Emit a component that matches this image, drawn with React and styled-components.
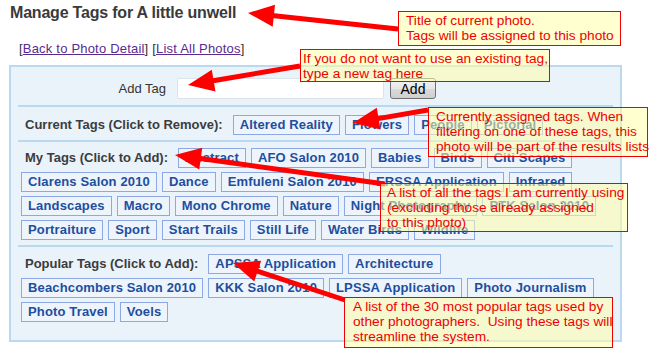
import React from "react";
import styled, { createGlobalStyle } from "styled-components";

const Global = createGlobalStyle`
  html, body { margin: 0; padding: 0; background: #ffffff; }
  body { font-family: "Liberation Sans", Arial, sans-serif; }
`;

const Page = styled.div`
  position: relative;
  width: 653px;
  height: 358px;
  overflow: hidden;
  background: #fff;
`;

const Title = styled.h1`
  margin: 0;
  padding: 3px 0 0 10px;
  font-size: 16px;
  line-height: 19px;
  letter-spacing: -0.2px;
  font-weight: bold;
  color: #3a3a3a;
`;

const NavLine = styled.div`
  margin: 19px 0 0 19px;
  font-size: 13px;
  line-height: 15px;
  letter-spacing: 0.2px;
  color: #333;
`;

const NavLink = styled.a`
  color: #5a2a90;
  text-decoration: underline;
`;

const Panel = styled.div`
  box-sizing: border-box;
  margin: 9px 0 0 9px;
  width: 613px;
  border: 2px solid #b8d9f0;
  background: #eaf2fa;
  padding: 0 7px 18px;
`;

const AddRow = styled.div`
  display: flex;
  align-items: center;
  height: 22px;
  margin-top: 10px;
  margin-bottom: 6px;
`;

const AddLabel = styled.label`
  width: 148px;
  text-align: right;
  font-size: 13px;
  color: #333;
  margin-right: 11px;
`;

const TagInput = styled.input`
  box-sizing: border-box;
  width: 207px;
  height: 21px;
  border: 1px solid #dde3ea;
  border-radius: 2px;
  background: #fff;
  margin: 0 6px 0 0;
  padding: 0 3px;
`;

const AddButton = styled.button`
  box-sizing: border-box;
  width: 46px;
  height: 21px;
  margin-top: 1px;
  border: 1px solid #707070;
  border-radius: 3px;
  background: linear-gradient(#f3f3f3, #e6e6e6 50%, #dadada 51%, #cfcfcf);
  font-family: "Liberation Sans", Arial, sans-serif;
  font-size: 14px;
  color: #000;
  padding: 0;
`;

const Section = styled.div`
  border-top: 2px solid #b8d9f0;
  padding: ${(p) => p.$top}px 3px ${(p) => p.$bottom}px;
  display: flex;
  flex-wrap: wrap;
  column-gap: 5px;
  row-gap: 4px;
  align-items: center;
`;

const SectionLabel = styled.span`
  font-size: 13px;
  font-weight: bold;
  color: #3c3c3c;
  padding-left: 4px;
  margin-right: 5px;
  line-height: 20px;
`;

const Tag = styled.a`
  box-sizing: border-box;
  display: inline-block;
  height: 20px;
  line-height: 18px;
  padding: 0 6px;
  border: 1px solid #8ea8e6;
  background: #edf4fc;
  color: #1e4e9e;
  font-size: 13px;
  font-weight: bold;
  letter-spacing: 0.15px;
  text-decoration: none;
  white-space: nowrap;
`;

const Callout = styled.div`
  position: absolute;
  box-sizing: border-box;
  border: 1px solid #f00000;
  background: rgba(255, 255, 170, 0.55);
  color: #f00000;
  font-size: 13.7px;
  line-height: 15px;
  white-space: pre;
  z-index: 3;
`;

const ArrowLayer = styled.svg`
  position: absolute;
  left: 0;
  top: 0;
  pointer-events: none;
  z-index: 2;
`;

function Arrow({ tip, tail, len = 26, half = 11, width = 5 }) {
  const dx = tail[0] - tip[0];
  const dy = tail[1] - tip[1];
  const d = Math.hypot(dx, dy);
  const ux = dx / d;
  const uy = dy / d;
  const bx = tip[0] + ux * len;
  const by = tip[1] + uy * len;
  const px = -uy;
  const py = ux;
  const pts = [
    [tip[0], tip[1]],
    [bx + px * half, by + py * half],
    [bx - px * half, by - py * half],
  ]
    .map((p) => p.join(","))
    .join(" ");
  return (
    <g>
      <line
        x1={tip[0] + ux * (len - 2)}
        y1={tip[1] + uy * (len - 2)}
        x2={tail[0]}
        y2={tail[1]}
        stroke="#ff0000"
        strokeWidth={width}
      />
      <polygon points={pts} fill="#ff0000" />
    </g>
  );
}

const current = ["Altered Reality", "Flowers", "People", "Pictorial"];
const mine = [
  "Abstract", "AFO Salon 2010", "Babies", "Birds", "Citi Scapes",
  "Clarens Salon 2010", "Dance", "Emfuleni Salon 2010", "ERSSA Application", "Infrared",
  "Landscapes", "Macro", "Mono Chrome", "Nature", "Night Photography", "PTK Salon 2010",
  "Portraiture", "Sport", "Start Trails", "Still Life", "Water Birds", "Wildlife",
];
const popular = [
  "APSSA Application", "Architecture", "Beachcombers Salon 2010", "KKK Salon 2010",
  "LPSSA Application", "Photo Journalism", "Photo Travel", "Voels",
];

const callouts = [
  { left: 398, top: 11, width: 223, height: 35, pad: 7, text: "Title of current photo.\nTags will be assigned to this photo" },
  { left: 300, top: 49, width: 250, height: 33, pad: 2, text: "If you do not want to use an existing tag,\ntype a new tag here" },
  { left: 428, top: 107, width: 220, height: 50, pad: 7, text: "Currently assigned tags. When\nfiltering on one of these tags, this\nphoto will be part of the results lists" },
  { left: 380, top: 183, width: 248, height: 49, pad: 6, text: "A list of all the tags I am currently using\n(excluding those already assigned\nto this photo)" },
  { left: 344, top: 297, width: 269, height: 51, pad: 8, text: "A list of the 30 most popular tags used by\nother photographers.  Using these tags will\nstreamline the system." },
];

export default function App() {
  return (
    <Page>
      <Global />
      <Title>Manage Tags for A little unwell</Title>
      <NavLine>
        [<NavLink href="#">Back to Photo Detail</NavLink>] [<NavLink href="#">List All Photos</NavLink>]
      </NavLine>
      <Panel>
        <AddRow>
          <AddLabel>Add Tag</AddLabel>
          <TagInput type="text" />
          <AddButton type="button">Add</AddButton>
        </AddRow>
        <Section $top={8} $bottom={5}>
          <SectionLabel>Current Tags (Click to Remove):</SectionLabel>
          {current.map((t) => (
            <Tag key={t} href="#">{t}</Tag>
          ))}
        </Section>
        <Section $top={6} $bottom={5}>
          <SectionLabel>My Tags (Click to Add):</SectionLabel>
          {mine.map((t) => (
            <Tag key={t} href="#">{t}</Tag>
          ))}
        </Section>
        <Section $top={7} $bottom={0}>
          <SectionLabel>Popular Tags (Click to Add):</SectionLabel>
          {popular.map((t) => (
            <Tag key={t} href="#">{t}</Tag>
          ))}
        </Section>
      </Panel>

      <ArrowLayer width="653" height="358" viewBox="0 0 653 358">
        <Arrow tip={[248, 13]} tail={[398, 29]} />
        <Arrow tip={[188, 85]} tail={[300, 66]} />
        <Arrow tip={[353, 123]} tail={[428, 110]} />
        <Arrow tip={[175, 155]} tail={[385, 184]} />
        <Arrow tip={[233, 263]} tail={[345, 300]} />
      </ArrowLayer>

      {callouts.map((c, i) => (
        <Callout
          key={i}
          style={{ left: c.left, top: c.top, width: c.width, height: c.height, paddingLeft: c.pad, paddingTop: 1 }}
        >
          {c.text}
        </Callout>
      ))}
    </Page>
  );
}
